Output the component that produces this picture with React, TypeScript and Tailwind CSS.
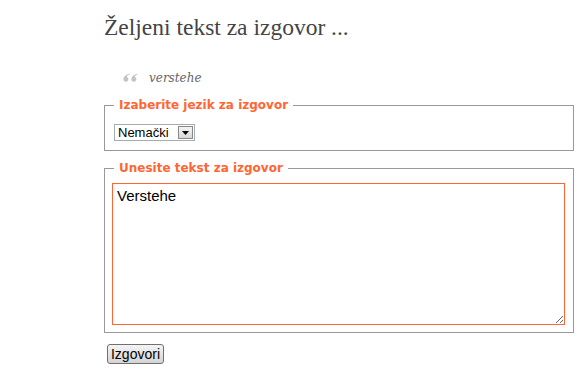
export default function App() {
  return (
    <div className="min-h-[385px] w-[583px] bg-white">
      <div className="ml-[104px] w-[470px] pt-[11px]">
        <h1 className="font-['Liberation_Serif',serif] text-[23.5px] leading-[32px] text-[#444]">
          Željeni tekst za izgovor ...
        </h1>

        <div className="mt-[26px] ml-[19px] flex h-[18px] items-center gap-[11px]">
          <svg width="15" height="9" viewBox="0 0 14 8" className="-mt-[2px]">
            <path
              d="M6 0.3C3 1.2 0.4 3 0.4 5.6a2.3 2.3 0 1 0 3.2-2C3.8 2.3 4.8 1.4 6.3 1Z"
              fill="#c4c4c4"
            />
            <path
              d="M13.4 0.3C10.4 1.2 7.8 3 7.8 5.6a2.3 2.3 0 1 0 3.2-2C11.2 2.3 12.2 1.4 13.7 1Z"
              fill="#c4c4c4"
            />
          </svg>
          <span className="font-['DejaVu_Serif',serif] text-[12px] italic text-[#666]">
            verstehe
          </span>
        </div>

        <fieldset className="mt-[11px] border border-[#999] pl-[9px] pr-2 pt-[12px] pb-[9px]">
          <legend className="px-[5px] font-['DejaVu_Sans',sans-serif] text-[12px] leading-[14px] font-bold text-[#ff6633]">
            Izaberite jezik za izgovor
          </legend>
          <div className="flex h-[17px] w-[81px] items-center border border-[#a5acb2] bg-white">
            <span className="flex-1 pl-[3px] font-['Liberation_Sans',sans-serif] text-[13px] leading-[15px] text-[#000]">
              Nemački
            </span>
            <span className="mr-[1px] flex h-[13px] w-[15px] items-center justify-center border border-[#888] bg-gradient-to-b from-[#f4f4f4] to-[#d8d8d8]">
              <svg width="7" height="4" viewBox="0 0 7 4">
                <path d="M0 0h7L3.5 4z" fill="#000" />
              </svg>
            </span>
          </div>
        </fieldset>

        <fieldset className="mt-[10px] border border-[#999] pl-[7px] pr-2 pt-[8px] pb-[7px]">
          <legend className="ml-[2px] px-[5px] font-['DejaVu_Sans',sans-serif] text-[12px] leading-[14px] font-bold text-[#ff6633]">
            Unesite tekst za izgovor
          </legend>
          <textarea
            defaultValue="Verstehe"
            className="block h-[142px] w-[453px] border border-[#ff6633] px-[4px] py-[3px] font-['Liberation_Sans',sans-serif] text-[15px] leading-[18px] text-[#000] outline-none"
          />
        </fieldset>

        <button className="mt-[11px] ml-[3px] h-[20px] w-[57px] rounded-[3px] border border-[#707070] bg-gradient-to-b from-[#f4f4f4] to-[#d4d4d4] font-['Liberation_Sans',sans-serif] text-[14px] leading-[15px] text-[#000]">
          Izgovori
        </button>
      </div>
    </div>
  );
}
